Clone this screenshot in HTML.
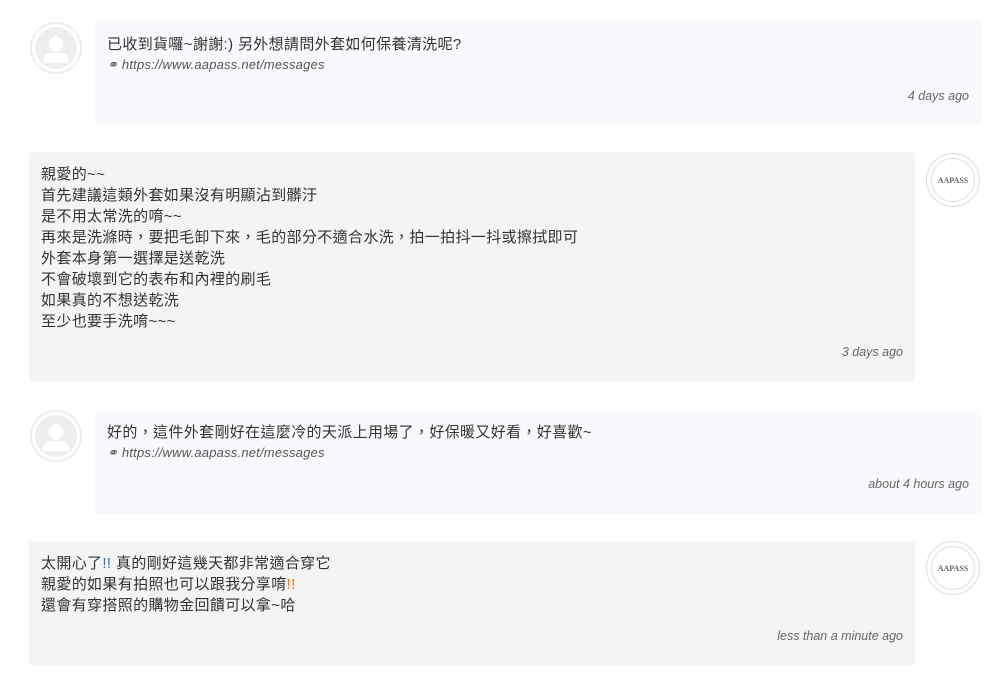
<!DOCTYPE html>
<html><head><meta charset="utf-8"><style>
body{margin:0;width:1008px;height:687px;background:#fff;font-family:"Liberation Sans","Noto Sans CJK TC",sans-serif;color:#333;position:relative;overflow:hidden}
.b{position:absolute;border-radius:3px;font-size:15px;letter-spacing:0.35px;line-height:21px;box-sizing:border-box}
.u{background:#f8f9fc;left:95px;width:886px;padding:13px 12px 0 12px}
.a{background:#f4f4f4;left:29px;width:886px;padding:12px 12px 0 12px}
.link{font-size:13px;letter-spacing:0.2px;font-style:italic;color:#555;line-height:20px}
.t{position:absolute;right:12px;font-size:12.5px;letter-spacing:0;font-style:italic;color:#666}
.av{position:absolute;width:52px;height:52px;border-radius:50%;border:2px solid #eee;background:#fff;box-sizing:border-box}
.av .in{position:absolute;left:3px;top:3px;width:42px;height:42px;border-radius:50%;background:#eee;overflow:hidden}
.av .h{position:absolute;left:14px;top:9px;width:14px;height:16px;border-radius:50%;background:#fff}
.av .s{position:absolute;left:8px;top:26px;width:26px;height:10px;border-radius:8px 8px 0 0;background:#fff}
.lg{position:absolute;width:54px;height:54px;border-radius:50%;border:1px solid #ddd;background:#fff;box-sizing:border-box}
.lg .r{position:absolute;left:4px;top:4px;width:44px;height:44px;border-radius:50%;border:1px solid #ddd;box-sizing:border-box;text-align:center;font-family:"Liberation Serif",serif;font-size:8px;font-weight:bold;color:#666;line-height:44px;letter-spacing:0}
.o{color:#e07b1a}.bl{color:#3a6fb0}
</style></head><body>
<div class="av" style="left:30px;top:22px"><div class="in"><div class="h"></div><div class="s"></div></div></div>
<div class="b u" style="top:21px;height:104px">已收到貨囉~謝謝:) 另外想請問外套如何保養清洗呢?<div class="link">⚭ https://www.aapass.net/messages</div><div class="t" style="top:65px">4 days ago</div></div>

<div class="b a" style="top:152px;height:229px">親愛的~~<br>首先建議這類外套如果沒有明顯沾到髒汙<br>是不用太常洗的唷~~<br>再來是洗滌時，要把毛卸下來，毛的部分不適合水洗，拍一拍抖一抖或擦拭即可<br>外套本身第一選擇是送乾洗<br>不會破壞到它的表布和內裡的刷毛<br>如果真的不想送乾洗<br>至少也要手洗唷~~~<div class="t" style="top:190px">3 days ago</div></div>
<div class="lg" style="left:926px;top:153px"><div class="r">AAPASS</div></div>

<div class="av" style="left:30px;top:410px"><div class="in"><div class="h"></div><div class="s"></div></div></div>
<div class="b u" style="top:409px;height:105px">好的，這件外套剛好在這麼冷的天派上用場了，好保暖又好看，好喜歡~<div class="link">⚭ https://www.aapass.net/messages</div><div class="t" style="top:65px">about 4 hours ago</div></div>

<div class="b a" style="top:541px;height:124px">太開心了<span class="bl">!!</span> 真的剛好這幾天都非常適合穿它<br>親愛的如果有拍照也可以跟我分享唷<span class="o">!!</span><br>還會有穿搭照的購物金回饋可以拿~哈<div class="t" style="top:85px">less than a minute ago</div></div>
<div class="lg" style="left:926px;top:541px"><div class="r">AAPASS</div></div>
</body></html>
